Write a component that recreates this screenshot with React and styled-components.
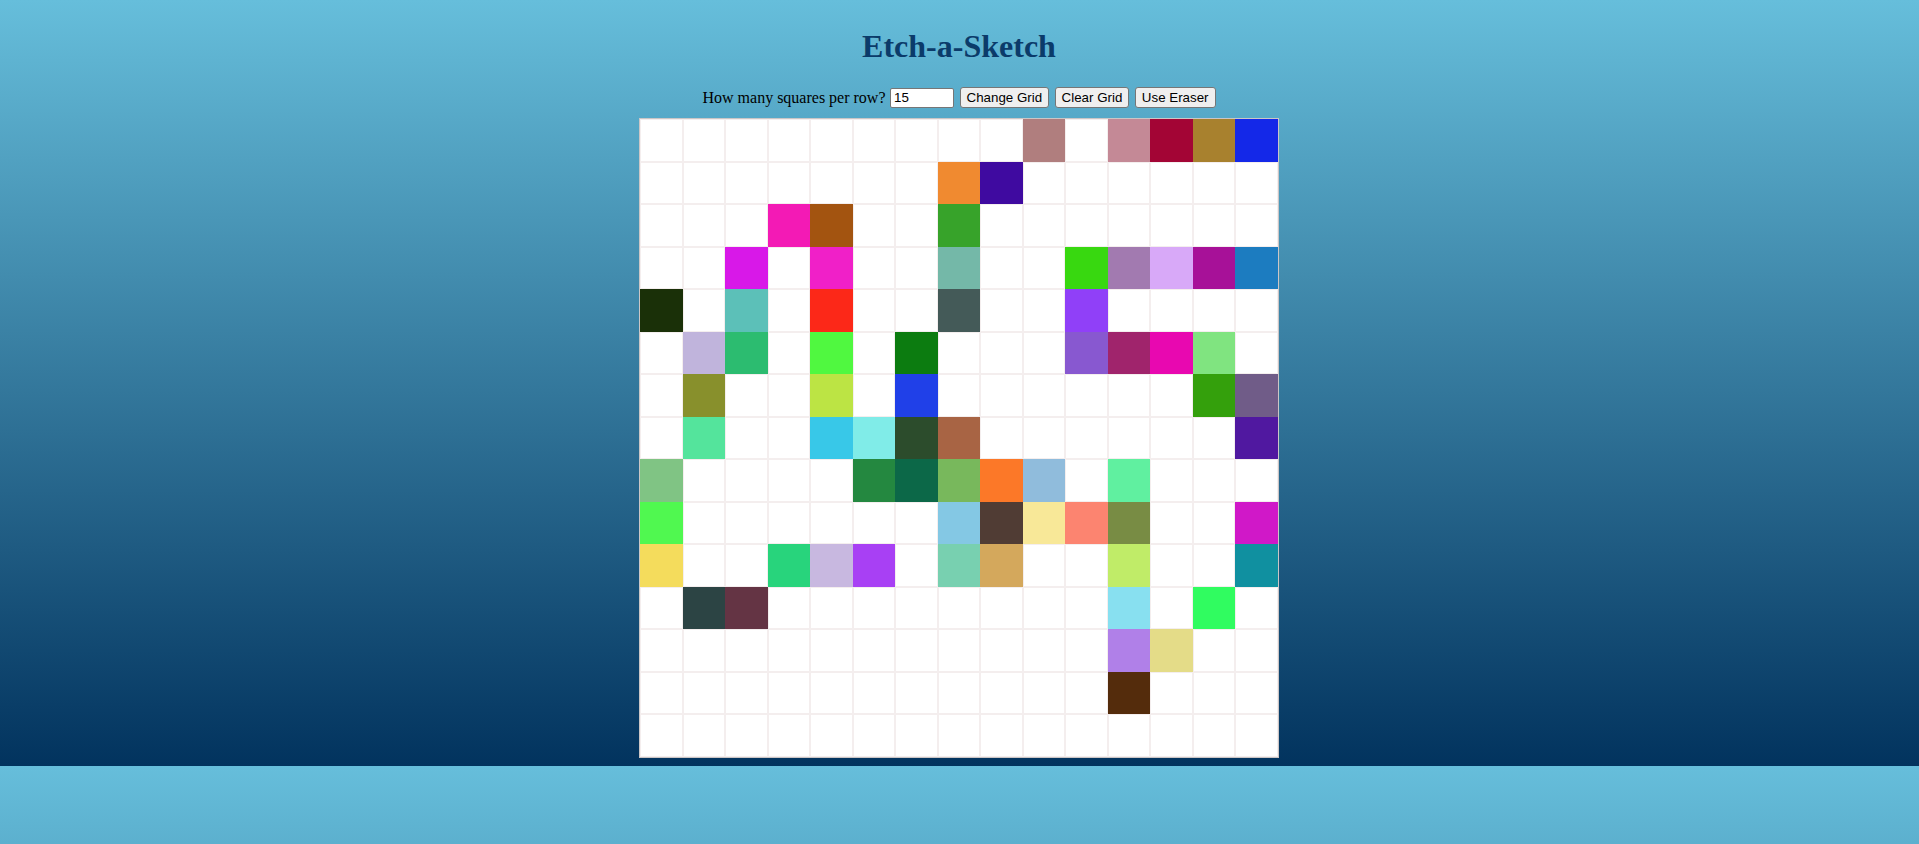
import React from "react";
import styled, { createGlobalStyle } from "styled-components";

const GlobalStyle = createGlobalStyle`
  html {
    background: linear-gradient(#66bedb, #02335e) 0 0 / 100% 766px repeat;
  }
  body {
    margin: 0;
    font-family: "Liberation Serif", "Times New Roman", serif;
  }
`;

const Page = styled.div`
  display: flex;
  flex-direction: column;
  align-items: center;
  padding: 28px 1px 8px 0;
`;

const Title = styled.h1`
  margin: 0;
  font: 700 32px/37px "Liberation Serif", "Times New Roman", serif;
  color: #0b3b6a;
`;

const Controls = styled.div`
  margin-top: 22px;
  height: 21px;
  display: flex;
  align-items: center;
  gap: 5.5px;
  font: 16px "Liberation Serif", "Times New Roman", serif;
  color: #000;
`;

const Label = styled.span`
  margin-right: -1px;
`;

const SizeInput = styled.input`
  box-sizing: border-box;
  width: 64px;
  height: 20px;
  padding: 1px 3px;
  border: 1px solid #767676;
  border-radius: 2px;
  background: #fff;
  font: 13.333px "Liberation Sans", Arial, sans-serif;
  color: #000;
  outline: none;
`;

const Button = styled.button`
  box-sizing: border-box;
  height: 21px;
  padding: 1px 6px;
  border: 1px solid #767676;
  border-radius: 3px;
  background: #efefef;
  font: 13.333px "Liberation Sans", Arial, sans-serif;
  color: #000;
  cursor: pointer;
`;

const Board = styled.div`
  margin-top: 10px;
  box-sizing: border-box;
  width: 640px;
  height: 640px;
  border: 1px solid #cbc6c6;
  display: grid;
  grid-template-columns: repeat(${(p) => p.$size}, 1fr);
  grid-template-rows: repeat(${(p) => p.$size}, 1fr);
  background: #fff;
`;

const Cell = styled.div`
  border: 1px solid ${(p) => p.$color || "#f4eeee"};
  background: ${(p) => p.$color || "#fff"};
`;

const painted = {
  "0,9": "#b07e7e",
  "0,11": "#c48996",
  "0,12": "#a30535",
  "0,13": "#a8812e",
  "0,14": "#1428e8",
  "1,7": "#f08a30",
  "1,8": "#3f0aa0",
  "2,3": "#f31ab5",
  "2,4": "#a35410",
  "2,7": "#37a32a",
  "3,2": "#d818e8",
  "3,4": "#f020c8",
  "3,7": "#74b8a8",
  "3,10": "#38d810",
  "3,11": "#a27ab0",
  "3,12": "#d8a9f8",
  "3,13": "#a71198",
  "3,14": "#1c7cc0",
  "4,0": "#1a3008",
  "4,2": "#5cc0b8",
  "4,4": "#fc2818",
  "4,7": "#445a58",
  "4,10": "#9040f8",
  "5,1": "#c0b4dc",
  "5,2": "#2cbc70",
  "5,4": "#50f840",
  "5,6": "#0c7c10",
  "5,10": "#8858d0",
  "5,11": "#a0246c",
  "5,12": "#e808b0",
  "5,13": "#80e480",
  "6,1": "#88902c",
  "6,4": "#bce444",
  "6,6": "#2040e8",
  "6,13": "#34a00c",
  "6,14": "#705c88",
  "7,1": "#54e49c",
  "7,4": "#38c8e8",
  "7,5": "#80ece8",
  "7,6": "#2c4c2c",
  "7,7": "#a86444",
  "7,14": "#5018a0",
  "8,0": "#80c484",
  "8,5": "#248840",
  "8,6": "#0c6848",
  "8,7": "#78b85c",
  "8,8": "#fc7828",
  "8,9": "#90bcdc",
  "8,11": "#60f0a0",
  "9,0": "#50f850",
  "9,7": "#84c8e4",
  "9,8": "#503c34",
  "9,9": "#f8e898",
  "9,10": "#fc8470",
  "9,11": "#788c44",
  "9,14": "#d018c8",
  "10,0": "#f4dc5c",
  "10,3": "#28d47c",
  "10,4": "#c8b8e0",
  "10,5": "#a840f4",
  "10,7": "#78d0b0",
  "10,8": "#d4a85c",
  "10,11": "#c0ec68",
  "10,14": "#1090a0",
  "11,1": "#2c4444",
  "11,2": "#643444",
  "11,11": "#88e0f0",
  "11,13": "#30fc60",
  "12,11": "#b080e8",
  "12,12": "#e4dc88",
  "13,11": "#542c0c",
};

const SIZE = 15;

export default function App() {
  const cells = [];
  for (let r = 0; r < SIZE; r++) {
    for (let c = 0; c < SIZE; c++) {
      cells.push(<Cell key={`${r}-${c}`} $color={painted[`${r},${c}`]} />);
    }
  }
  return (
    <>
      <GlobalStyle />
      <Page>
        <Title>Etch-a-Sketch</Title>
        <Controls>
          <Label>How many squares per row?</Label>
          <SizeInput type="text" defaultValue="15" />
          <Button>Change Grid</Button>
          <Button>Clear Grid</Button>
          <Button>Use Eraser</Button>
        </Controls>
        <Board $size={SIZE}>{cells}</Board>
      </Page>
    </>
  );
}
